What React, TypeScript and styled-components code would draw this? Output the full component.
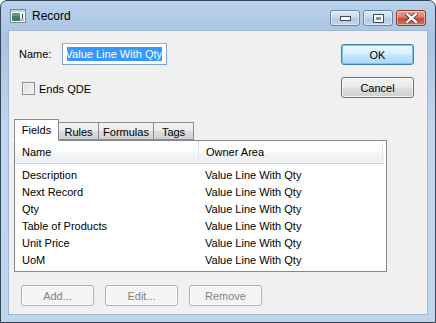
import React from 'react';
import styled, { createGlobalStyle } from 'styled-components';

/* Global
---------------------------------- */

const GlobalStyle = createGlobalStyle`
	html, body {
		margin: 0;
		padding: 0;
		background: #ffffff;
	}

	body {
		font-family: 'Liberation Sans', Arial, sans-serif;
		font-size: 11px;
		color: #000;
	}
`;

/* Style
---------------------------------- */

const Frame = styled.div`
	width: 436px;
	height: 323px;
	box-sizing: border-box;
	border: 1px solid #35465a;
	border-radius: 7px 7px 0 0;
	background: linear-gradient(180deg, #b9d1ea 0%, #a8c4e2 12%, #c2d6ec 40%, #bfd5ec 100%);
	display: flex;
	flex-direction: column;
	overflow: hidden;
`;

const TitleBar = styled.div`
	height: 29px;
	display: flex;
	align-items: center;
	padding: 0 9px 0 9px;

	.caption {
		margin-left: 6px;
		font-size: 12px;
		color: #000;
		padding-top: 1px;
	}

	.controls {
		margin-left: auto;
		display: flex;
		gap: 3px;
		align-self: flex-start;
		margin-top: 9px;
	}
`;

const CaptionButton = styled.div<{ $close?: boolean }>`
	width: 30px;
	height: 16px;
	box-sizing: border-box;
	border: 1px solid ${({ $close }) => ($close ? '#8b3a32' : '#6d84a0')};
	border-radius: 3px;
	background: ${({ $close }) =>
		$close
			? 'linear-gradient(180deg, #e9a99c 0%, #d47c6c 45%, #c14d36 55%, #d1735c 100%)'
			: 'linear-gradient(180deg, #e1ebf6 0%, #cad9ec 45%, #b2c8e2 55%, #c4d6ec 100%)'};
	box-shadow: inset 0 0 0 1px rgba(255, 255, 255, 0.45);
	display: flex;
	align-items: center;
	justify-content: center;
`;

const Client = styled.div`
	margin: 0 7px;
	height: 285px;
	box-sizing: border-box;
	background: #f0f0f0;
	border: 1px solid #a3b8d0;
	display: flex;
	flex-direction: column;
	padding: 12px 13px 0 5px;
`;

const TopArea = styled.div`
	display: flex;
	justify-content: space-between;
	align-items: flex-start;
`;

const LeftCol = styled.div`
	display: flex;
	flex-direction: column;
	padding-left: 5px;
`;

const NameRow = styled.div`
	display: flex;
	align-items: center;

	label {
		width: 43px;
	}
`;

const NameInput = styled.div`
	width: 105px;
	height: 22px;
	box-sizing: border-box;
	border: 1px solid #7da2ce;
	border-top-color: #abadb3;
	background: #fff;
	padding: 3px 4px;
	overflow: hidden;
	white-space: nowrap;

	.selected {
		display: block;
		height: 14px;
		line-height: 14px;
		background: #3399ff;
		color: #fff;
		overflow: hidden;
		direction: rtl;
		text-align: left;
		font-size: 11px;
	}
`;

const CheckRow = styled.label`
	display: flex;
	align-items: center;
	gap: 4px;
	margin-top: 17px;
	margin-left: 3px;
`;

const CheckBox = styled.span`
	width: 13px;
	height: 13px;
	box-sizing: border-box;
	border: 1px solid #8f8f8f;
	background: linear-gradient(135deg, #dcdcdc 0%, #f7f7f7 100%);
	box-shadow: inset 0 0 0 1px #f4f4f4;
`;

const RightCol = styled.div`
	display: flex;
	flex-direction: column;
	gap: 12px;
	padding-top: 1px;
`;

const PushButton = styled.div<{ $default?: boolean; $disabled?: boolean }>`
	width: 73px;
	height: 21px;
	box-sizing: border-box;
	border: 1px solid ${({ $default, $disabled }) => ($default ? '#3c7fb1' : $disabled ? '#adb2b5' : '#707070')};
	border-radius: 3px;
	background: ${({ $default, $disabled }) =>
		$disabled
			? '#f4f4f4'
			: $default
				? 'linear-gradient(180deg, #eaf6fd 0%, #d9f0fc 45%, #bee6fd 55%, #a7d9f5 100%)'
				: 'linear-gradient(180deg, #f2f2f2 0%, #ebebeb 45%, #dddddd 55%, #cfcfcf 100%)'};
	box-shadow: inset 0 0 0 1px ${({ $default }) => ($default ? '#7ec4ec' : 'rgba(255,255,255,0.7)')};
	color: ${({ $disabled }) => ($disabled ? '#838383' : '#000')};
	display: flex;
	align-items: center;
	justify-content: center;
	font-size: 11px;
`;

const TabStrip = styled.div`
	display: flex;
	align-items: flex-end;
	margin-top: 21px;
	height: 21px;
	padding-left: 1px;
	position: relative;
	z-index: 1;
`;

const Tab = styled.div<{ $active?: boolean; $width: number }>`
	width: ${({ $width }) => $width}px;
	height: ${({ $active }) => ($active ? '22px' : '18px')};
	box-sizing: border-box;
	border: 1px solid #898c95;
	border-bottom: ${({ $active }) => ($active ? '1px solid #fff' : '1px solid #898c95')};
	margin-bottom: ${({ $active }) => ($active ? '-1px' : '0')};
	margin-left: -1px;
	background: ${({ $active }) => ($active ? '#fff' : 'linear-gradient(180deg, #f2f2f2 0%, #ebebeb 50%, #dddddd 51%, #cfcfcf 100%)')};
	display: flex;
	align-items: center;
	justify-content: center;
	white-space: nowrap;
	padding-top: ${({ $active }) => ($active ? '0' : '1px')};
`;

const ListBox = styled.div`
	width: 373px;
	height: 132px;
	box-sizing: border-box;
	border: 1px solid #828790;
	background: #fff;
	display: flex;
	flex-direction: column;
`;

const Header = styled.div`
	display: grid;
	grid-template-columns: 184px 184px 1fr;
	height: 22px;
	margin-right: 2px;
	background: linear-gradient(180deg, #ffffff 0%, #ffffff 40%, #f3f4f6 60%, #eef0f3 100%);
	border-bottom: 1px solid #d5d5d5;

	div {
		display: flex;
		align-items: center;
		padding-left: 7px;
		border-right: 1px solid #e3e5e8;
	}
`;

const Rows = styled.div`
	padding-top: 2px;
`;

const Row = styled.div`
	display: grid;
	grid-template-columns: 184px 1fr;
	height: 17px;
	align-items: center;

	span {
		padding-left: 7px;
	}

	span + span {
		padding-left: 6px;
	}
`;

const BottomBar = styled.div`
	display: flex;
	gap: 11px;
	margin-top: 13px;
	padding-left: 7px;
`;

/* Component
------------------------------ */

const fields = [
	{ name: 'Description', area: 'Value Line With Qty' },
	{ name: 'Next Record', area: 'Value Line With Qty' },
	{ name: 'Qty', area: 'Value Line With Qty' },
	{ name: 'Table of Products', area: 'Value Line With Qty' },
	{ name: 'Unit Price', area: 'Value Line With Qty' },
	{ name: 'UoM', area: 'Value Line With Qty' },
];

const tabs = [
	{ label: 'Fields', width: 45 },
	{ label: 'Rules', width: 41 },
	{ label: 'Formulas', width: 56 },
	{ label: 'Tags', width: 41 },
];

const AppIcon = () => (
	<svg width="16" height="14" viewBox="0 0 16 14">
		<rect x="0.5" y="0.5" width="15" height="13" fill="#f4f6f8" stroke="#7d8a96" />
		<rect x="1" y="1" width="14" height="2" fill="#c6d2de" />
		<rect x="2" y="4" width="8" height="8" fill="#3f7f6a" />
		<rect x="2" y="4" width="8" height="3" fill="#5b9c83" />
		<rect x="12" y="5" width="1" height="4" fill="#2e3b48" />
		<rect x="10" y="9" width="4" height="3" fill="#b8c2cc" />
	</svg>
);

const App = () => {
	return (
		<>
			<GlobalStyle />
			<Frame>
				<TitleBar>
					<AppIcon />
					<span className="caption">Record</span>
					<div className="controls">
						<CaptionButton>
							<svg width="11" height="5" viewBox="0 0 11 5">
								<rect x="0.5" y="0.5" width="10" height="4" fill="#fff" stroke="#3b4a5e" />
							</svg>
						</CaptionButton>
						<CaptionButton>
							<svg width="11" height="9" viewBox="0 0 11 9">
								<rect x="0.5" y="0.5" width="10" height="8" fill="#fff" stroke="#3b4a5e" />
								<rect x="3" y="3" width="5" height="3" fill="#7f93ab" />
							</svg>
						</CaptionButton>
						<CaptionButton $close>
							<svg width="13" height="10" viewBox="0 0 13 10">
								<path d="M2 1 L11 9 M11 1 L2 9" stroke="#5a2a24" strokeWidth="4" strokeLinecap="square" />
								<path d="M2 1 L11 9 M11 1 L2 9" stroke="#ffffff" strokeWidth="2.4" strokeLinecap="square" />
							</svg>
						</CaptionButton>
					</div>
				</TitleBar>

				<Client>
					<TopArea>
						<LeftCol>
							<NameRow>
								<label>Name:</label>
								<NameInput>
									<span className="selected">Value Line With Qty</span>
								</NameInput>
							</NameRow>
							<CheckRow>
								<CheckBox />
								<span>Ends QDE</span>
							</CheckRow>
						</LeftCol>

						<RightCol>
							<PushButton $default>OK</PushButton>
							<PushButton>Cancel</PushButton>
						</RightCol>
					</TopArea>

					<TabStrip>
						{tabs.map((tab, index) => (
							<Tab key={tab.label} $active={index === 0} $width={tab.width}>
								{tab.label}
							</Tab>
						))}
					</TabStrip>

					<ListBox>
						<Header>
							<div>Name</div>
							<div>Owner Area</div>
						</Header>
						<Rows>
							{fields.map((field) => (
								<Row key={field.name}>
									<span>{field.name}</span>
									<span>{field.area}</span>
								</Row>
							))}
						</Rows>
					</ListBox>

					<BottomBar>
						<PushButton $disabled>Add...</PushButton>
						<PushButton $disabled>Edit...</PushButton>
						<PushButton $disabled>Remove</PushButton>
					</BottomBar>
				</Client>
			</Frame>
		</>
	);
};

export default App;
